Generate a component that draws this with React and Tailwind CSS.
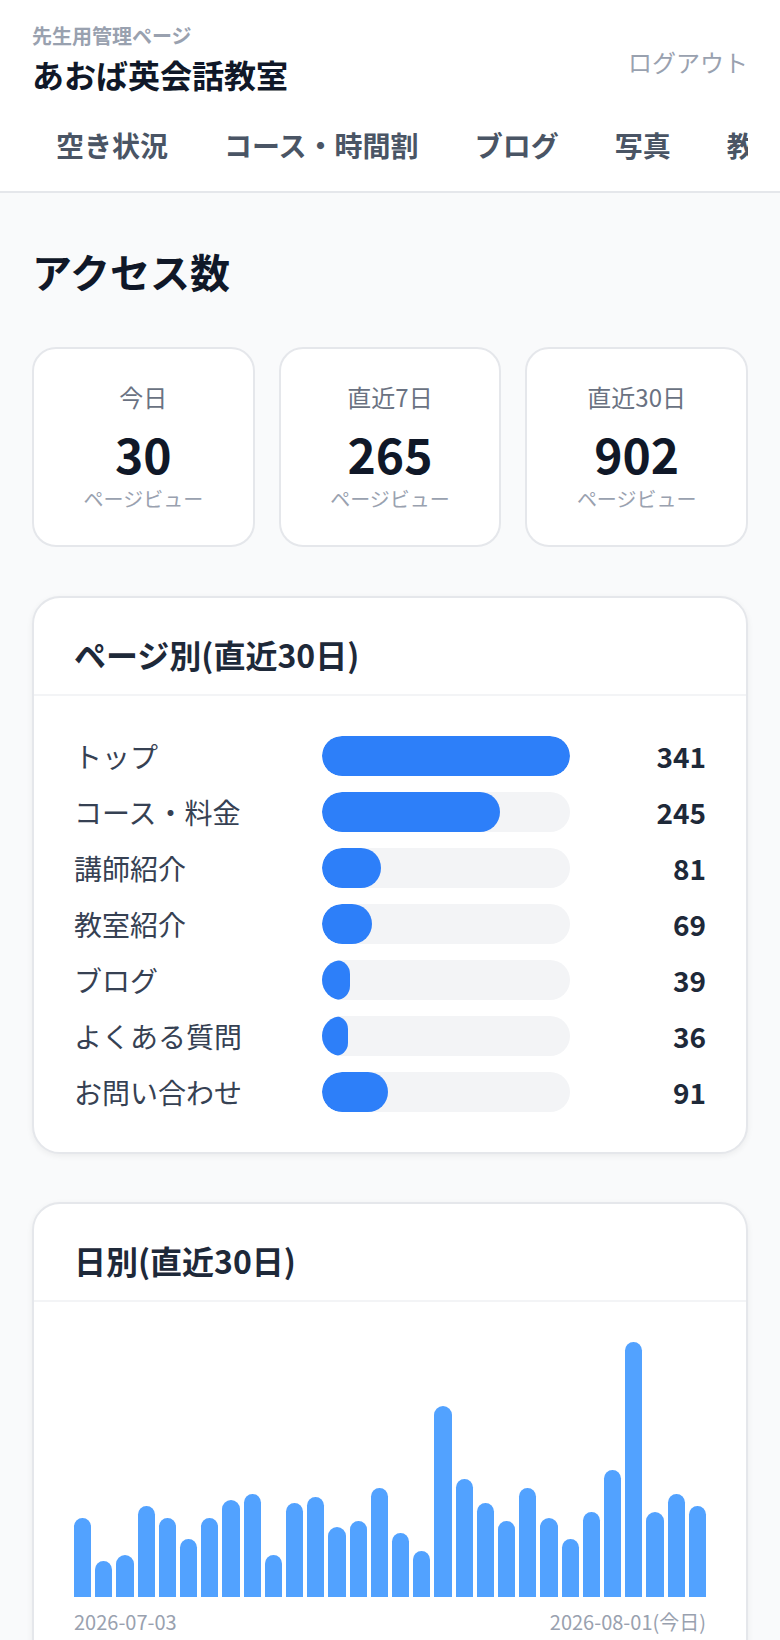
import React from "react";

const pages = [
  ["トップ", 341],
  ["コース・料金", 245],
  ["講師紹介", 81],
  ["教室紹介", 69],
  ["ブログ", 39],
  ["よくある質問", 36],
  ["お問い合わせ", 91],
];

const daily = [26, 12, 14, 30, 26, 19, 26, 32, 34, 14, 31, 33, 23, 25, 36, 21, 15, 63, 39, 31, 25, 36, 26, 19, 28, 42, 84, 28, 34, 30];

const nav = ["空き状況", "コース・時間割", "ブログ", "写真", "教室紹介", "設定"];

function Stat({ label, value }) {
  return (
    <div className="flex-1 rounded-3xl border-2 border-gray-200 bg-white py-8 text-center">
      <div className="text-[24px] leading-[32px] text-gray-500">{label}</div>
      <div className="mt-2 text-[48px] font-bold leading-[64px] text-gray-900">{value}</div>
      <div className="text-[20px] leading-[28px] text-gray-400">ページビュー</div>
    </div>
  );
}

function Card({ title, children }) {
  return (
    <div className="rounded-[28px] border-2 border-gray-200 bg-white shadow-[0_2px_6px_rgba(0,0,0,0.06)]">
      <div className="border-b-2 border-gray-100 px-10 pt-[32px] pb-[16px]">
        <h2 className="text-[32px] font-bold leading-[48px] text-gray-800">{title}</h2>
      </div>
      <div className="px-10 py-10">{children}</div>
    </div>
  );
}

export default function App() {
  const maxPage = Math.max(...pages.map((p) => p[1]));
  const maxDay = Math.max(...daily);
  return (
    <div
      className="min-h-[1640px] bg-gray-50"
      style={{ fontFamily: '"Noto Sans CJK JP", "Noto Sans", sans-serif' }}
    >
      <header className="border-b-2 border-gray-200 bg-white">
        <div className="flex items-start justify-between px-8 pt-[22px]">
          <div>
            <div className="text-[20px] font-semibold leading-[28px] text-gray-400">先生用管理ページ</div>
            <div className="mt-[2px] text-[32px] font-bold leading-[44px] text-gray-900">あおば英会話教室</div>
          </div>
          <button className="mt-[24px] text-[24px] leading-[32px] text-gray-400">ログアウト</button>
        </div>
        <nav className="mx-8 overflow-hidden">
          <div className="flex gap-[8px] whitespace-nowrap">
            {nav.map((n) => (
              <div key={n} className="px-6 pt-[29px] pb-[26px] text-[28px] font-bold leading-[40px] text-gray-600">
                {n}
              </div>
            ))}
          </div>
        </nav>
      </header>

      <main className="px-8 pt-[48px] pb-12">
        <h1 className="text-[40px] font-bold leading-[60px] text-gray-900">アクセス数</h1>
        <div className="mt-[46px] flex gap-6">
          <Stat label="今日" value="30" />
          <Stat label="直近7日" value="265" />
          <Stat label="直近30日" value="902" />
        </div>

        <div className="mt-[49px]">
          <Card title="ページ別(直近30日)">
            <div className="flex flex-col gap-4">
              {pages.map(([name, v]) => (
                <div key={name} className="flex h-10 items-center gap-6">
                  <div className="w-[224px] text-[28px] leading-[40px] text-gray-700">{name}</div>
                  <div className="h-10 flex-1 overflow-hidden rounded-full bg-gray-100">
                    <div
                      className="h-full rounded-full bg-[#2d7ff9]"
                      style={{ width: `${(v / maxPage) * 100}%` }}
                    />
                  </div>
                  <div className="w-[112px] text-right text-[28px] font-bold leading-[40px] text-gray-800">{v}</div>
                </div>
              ))}
            </div>
          </Card>
        </div>

        <div className="mt-12">
          <Card title="日別(直近30日)">
            <div className="flex h-[255px] items-end gap-1">
              {daily.map((v, i) => (
                <div
                  key={i}
                  className="flex-1 rounded-t-full bg-[#52a2ff]"
                  style={{ height: `${(v / maxDay) * 100}%` }}
                />
              ))}
            </div>
            <div className="mt-[11px] flex justify-between text-[20px] leading-[28px] text-gray-400">
              <span>2026-07-03</span>
              <span>2026-08-01(今日)</span>
            </div>
          </Card>
        </div>
      </main>
    </div>
  );
}
